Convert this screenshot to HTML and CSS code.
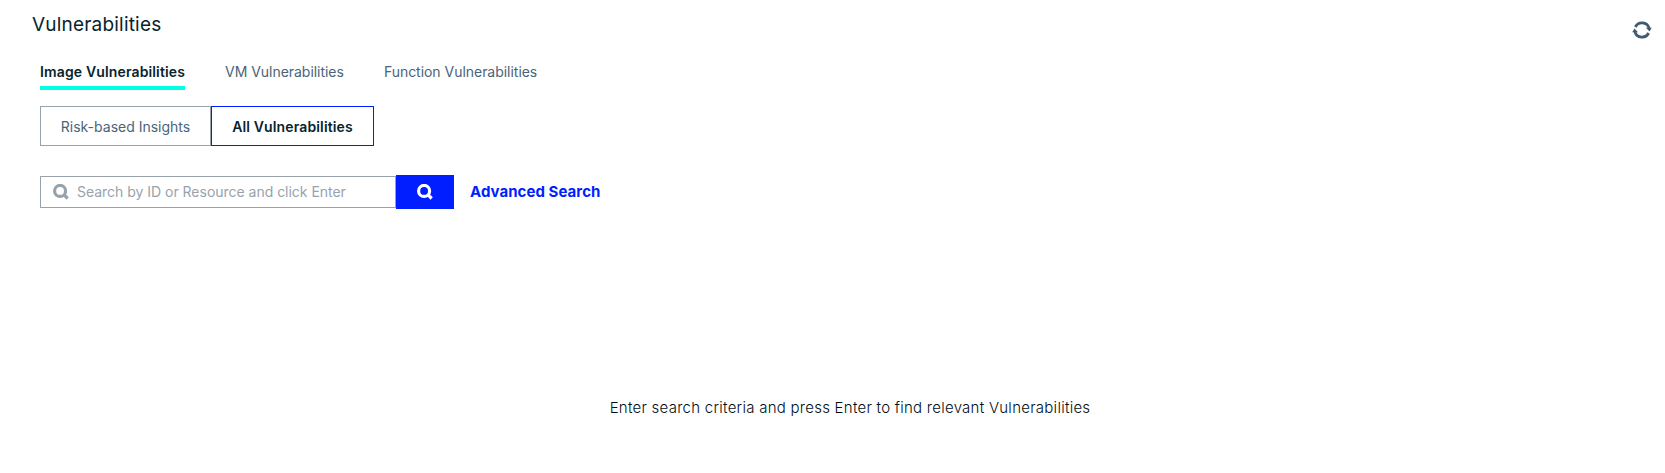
FILE: index.html
```html
<!DOCTYPE html>
<html lang="en">
<head>
<meta charset="utf-8">
<title>Vulnerabilities</title>
<link rel="stylesheet" href="styles.css">
</head>
<body>
<header class="header">
  <h1 class="title">Vulnerabilities</h1>
  <button class="refresh" aria-label="Refresh">
    <svg width="20" height="20" viewBox="0 0 20 20"><g fill="none" stroke="#3f5b73" stroke-width="2.8"><path d="M3.4 7A7.4 7.4 0 0 1 17.1 8.2"/><path d="M16.6 13A7.4 7.4 0 0 1 2.9 11.8"/></g><path fill="#3f5b73" d="M14 7.7h5.8l-2.3 3.9zM6 12.3H.2l2.3-3.9z"/></svg>
  </button>
</header>
<nav class="tabs">
  <a class="tab tab-active">Image Vulnerabilities</a>
  <a class="tab">VM Vulnerabilities</a>
  <a class="tab">Function Vulnerabilities</a>
</nav>
<div class="switch">
  <button class="option option-risk">Risk-based Insights</button>
  <button class="option option-active">All Vulnerabilities</button>
</div>
<div class="search">
  <label class="field">
    <svg class="field-icon" width="16" height="16" viewBox="0 0 16 16" fill="none" stroke="#98a2ad" stroke-width="3.2"><circle cx="7.1" cy="6.9" r="5.5"/><path d="M10.6 10.4L14.7 14.5"/></svg>
    <input class="input" type="text" placeholder="Search by ID or Resource and click Enter">
  </label>
  <button class="submit" aria-label="Search">
    <svg width="16" height="16" viewBox="0 0 16 16" fill="none" stroke="#fff" stroke-width="3.2"><circle cx="7.1" cy="6.9" r="5.5"/><path d="M10.6 10.4L14.7 14.5"/></svg>
  </button>
  <a class="advanced">Advanced Search</a>
</div>
<p class="message">Enter search criteria and press Enter to find relevant Vulnerabilities</p>
</body>
</html>
```
FILE: styles.css
```css
* { box-sizing: border-box; }
body { margin: 0; height: 473px; overflow: hidden; background: #fff; color: #07242d; font-family: Inter, "Liberation Sans", sans-serif; font-size: 14px; }
button, input { font: inherit; padding: 0; border: 0; background: none; border-radius: 0; }
.header { display: flex; justify-content: space-between; height: 60px; padding: 12px 13px 0 32px; }
.title { margin: 1px 0 0; font-size: 19px; line-height: 24px; font-weight: 400; letter-spacing: .2px; white-space: nowrap; }
.refresh { width: 20px; height: 20px; margin-top: 8px; }
.refresh svg, .submit svg { display: block; margin: auto; }
.tabs { display: flex; gap: 40px; height: 30px; padding-left: 40px; }
.tab { height: 30px; line-height: 24px; color: #4a6479; letter-spacing: -.03px; white-space: nowrap; }
.tab-active { width: 145px; border-bottom: 4px solid #00ffe4; color: #07242d; font-weight: 600; letter-spacing: .14px; }
.switch { display: flex; margin: 16px 0 0 40px; height: 40px; }
.option { height: 40px; border: 1px solid #98a2ad; line-height: 24px; padding-top: 1px; color: #4a6479; white-space: nowrap; }
.option-risk { width: 171px; }
.option-active { width: 163px; border-color: #001eff; color: #07242d; font-weight: 600; letter-spacing: .14px; }
.search { display: flex; align-items: center; height: 34px; margin: 29px 0 0 40px; }
.field { display: flex; align-items: center; width: 356px; height: 32px; border: 1px solid #98a2ad; padding-left: 12px; }
.field-icon { flex: none; }
.input { flex: 1; margin-left: 8px; outline: 0; line-height: 24px; letter-spacing: -.02px; }
.input::placeholder { color: #98a2ad; opacity: 1; }
.submit { width: 58px; height: 34px; background: #001eff; }
.advanced { margin: -2px 0 0 16px; font-size: 15px; font-weight: 700; letter-spacing: .05px; color: #001eff; white-space: nowrap; }
.message { margin: 187px 0 0 35px; font-size: 15px; line-height: 24px; font-weight: 300; text-align: center; letter-spacing: .26px; color: #000f16; }
```
